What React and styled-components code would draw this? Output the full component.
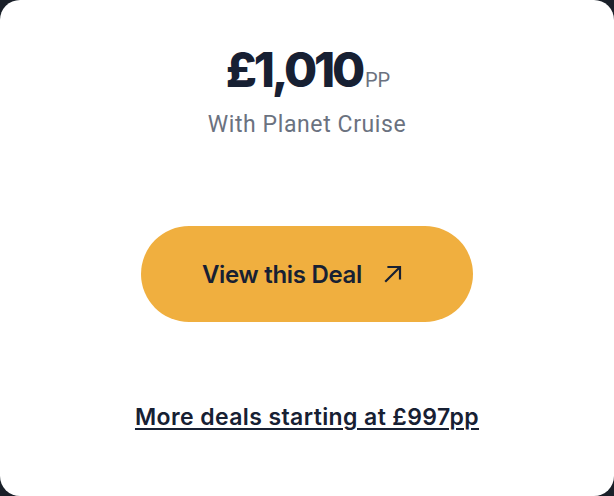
import styled, { createGlobalStyle } from "styled-components";

const GlobalStyle = createGlobalStyle`
  html, body {
    margin: 0;
    padding: 0;
    background: #1a2029;
  }
  * {
    box-sizing: border-box;
  }
`;

function ArrowIcon() {
  return (
    <svg width="18" height="18" viewBox="0 0 18 18" fill="none">
      <path
        d="M2 16L15.5 2.5M4.5 2H16V13.5"
        stroke="#172033"
        strokeWidth="2.2"
        strokeLinecap="square"
      />
    </svg>
  );
}

function App() {
  return (
    <>
      <GlobalStyle />
      <Card>
        <PriceBlock>
          <PriceRow>
            <Price>£1,010</Price>
            <PerPerson>PP</PerPerson>
          </PriceRow>
          <Operator>With Planet Cruise</Operator>
        </PriceBlock>

        <DealButton>
          View this Deal
          <ArrowIcon />
        </DealButton>

        <MoreDeals href="#">More deals starting at £997pp</MoreDeals>
      </Card>
    </>
  );
}

const Card = styled.div`
  width: 614px;
  height: 496px;
  background: #ffffff;
  border-radius: 20px;
  display: flex;
  flex-direction: column;
  align-items: center;
  padding-top: 40px;
`;

const PriceBlock = styled.div`
  display: flex;
  flex-direction: column;
  align-items: center;
`;

const PriceRow = styled.div`
  display: flex;
  align-items: baseline;
  padding-left: 2px;
`;

const Price = styled.span`
  font-family: Inter, "Liberation Sans", sans-serif;
  font-weight: 800;
  font-size: 48px;
  line-height: 60px;
  letter-spacing: -3.2px;
  color: #172033;
`;

const PerPerson = styled.span`
  font-family: Roboto, "Liberation Sans", sans-serif;
  font-size: 20px;
  color: #6b7280;
  margin-left: 3px;
`;

const Operator = styled.div`
  font-family: Roboto, "Liberation Sans", sans-serif;
  font-size: 23px;
  line-height: 30px;
  letter-spacing: 0.6px;
  color: #6b7280;
  margin-top: 10px;
`;

const DealButton = styled.button`
  margin-top: 86px;
  width: 332px;
  height: 96px;
  border: none;
  border-radius: 48px;
  background: #f0af3f;
  display: flex;
  align-items: center;
  justify-content: center;
  gap: 22px;
  padding: 0 10px 0 0;
  font-family: Inter, "Liberation Sans", sans-serif;
  font-weight: 600;
  font-size: 24px;
  letter-spacing: -0.3px;
  color: #172033;
  cursor: pointer;
`;

const MoreDeals = styled.a`
  margin-top: 81px;
  font-family: Inter, "Liberation Sans", sans-serif;
  font-weight: 600;
  font-size: 23px;
  letter-spacing: 0.4px;
  color: #172033;
  text-decoration: underline;
  text-decoration-thickness: 2px;
  text-underline-offset: 3px;
`;

export default App;
